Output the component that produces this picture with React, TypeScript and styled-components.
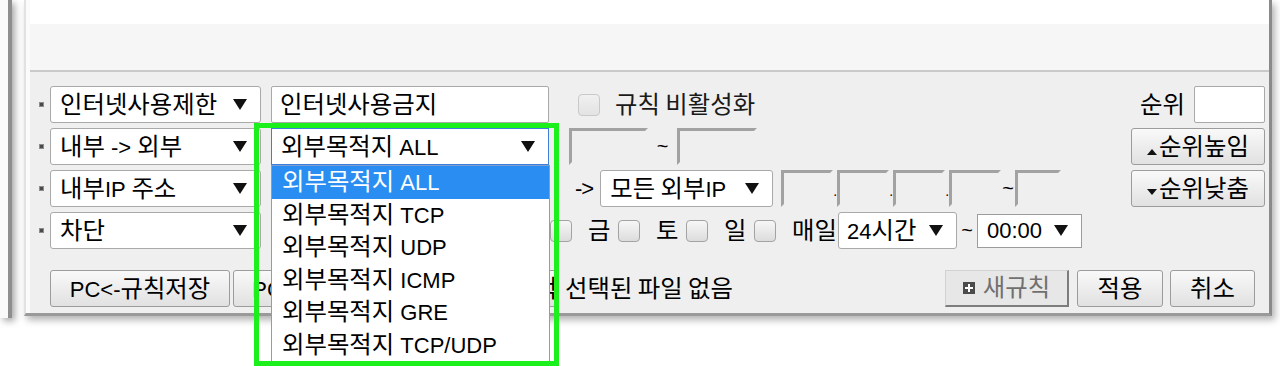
import React from "react";
import styled, { createGlobalStyle } from "styled-components";

const GlobalStyle = createGlobalStyle`
  html, body { margin: 0; padding: 0; background: #ffffff; overflow: hidden; }
  body {
    font-family: "Liberation Sans", "Noto Sans CJK KR", sans-serif;
    font-size: 22px;
    color: #000;
  }
  * { box-sizing: border-box; }
`;

const Desktop = styled.div`
  display: flex;
  align-items: flex-start;
  width: 1280px;
  height: 366px;
`;

const BackWindow = styled.div`
  flex-shrink: 0;
  width: 12px;
  height: 318px;
  background: #fafafa;
  border-right: 4px solid #8e8e8e;
  box-shadow: 3px 3px 7px rgba(0, 0, 0, 0.35);
`;

const Panel = styled.div`
  flex-shrink: 0;
  margin-left: 12px;
  width: 1248px;
  height: 316px;
  display: flex;
  flex-direction: column;
  background: #fbfbfb;
  border-left: 2px solid #e2e2e2;
  border-right: 3px solid #8a8a8a;
  border-bottom: 3px solid #9a9a9a;
  padding-left: 4px;
  box-shadow: 3px 4px 7px rgba(0, 0, 0, 0.3);
`;

const TopStrip = styled.div`
  height: 24px;
  background: #ffffff;
`;

const Header = styled.div`
  height: 48px;
  background: #f6f6f6;
  border-bottom: 2px solid #c9c9c9;
`;

const Body = styled.div`
  position: relative;
  flex: 1;
  display: flex;
  flex-direction: column;
  gap: 5px;
  padding: 14px 4px 6px 9px;
  background: #efefef;
`;

const Row = styled.div<{ $mt?: number; $pl?: number }>`
  display: flex;
  align-items: center;
  height: 37px;
  margin-top: ${(p) => p.$mt ?? 0}px;
  padding-left: ${(p) => p.$pl ?? 0}px;
  white-space: nowrap;
`;

const Bullet = styled.span`
  flex-shrink: 0;
  width: 5px;
  height: 5px;
  margin-right: 6px;
  background: #4a4a4a;
  border: 1px solid #8c8c8c;
`;

const Spacer = styled.div`
  flex: 1;
`;

const Hangul = styled.span`
  font-family: "Noto Sans CJK KR", sans-serif;
  font-size: 24.4px;
  line-height: 1;
`;

const HANGUL_RUN = /([\uAC00-\uD7A3]+(?: [\uAC00-\uD7A3]+)*)/;

const T = ({ children }: { children: string }) => (
  <span>
    {children
      .split(HANGUL_RUN)
      .filter((s) => s.length > 0)
      .map((s, i) =>
        /[\uAC00-\uD7A3]/.test(s) ? <Hangul key={i}>{s}</Hangul> : <React.Fragment key={i}>{s}</React.Fragment>
      )}
  </span>
);

const Caret = styled.span<{ $dir?: "up" | "down"; $small?: boolean; $mt?: number }>`
  display: inline-block;
  flex-shrink: 0;
  width: 0;
  height: 0;
  margin-top: ${(p) => p.$mt ?? 0}px;
  margin-right: ${(p) => (p.$small ? 2 : 0)}px;
  border-left: ${(p) => (p.$small ? 5 : 7)}px solid transparent;
  border-right: ${(p) => (p.$small ? 5 : 7)}px solid transparent;
  ${(p) =>
    p.$dir === "up"
      ? `border-bottom: ${p.$small ? 6 : 11}px solid #111;`
      : `border-top: ${p.$small ? 6 : 11}px solid #111;`}
`;

const SelectBox = styled.div<{
  $w: number;
  $ml?: number;
  $h?: number;
  $focused?: boolean;
  $square?: boolean;
  $pl?: number;
}>`
  flex-shrink: 0;
  width: ${(p) => p.$w}px;
  height: ${(p) => p.$h ?? 37}px;
  margin-left: ${(p) => p.$ml ?? 0}px;
  display: flex;
  align-items: center;
  justify-content: space-between;
  padding: 0 13px 0 ${(p) => p.$pl ?? 9}px;
  background: #ffffff;
  border: 1px solid ${(p) => (p.$focused ? "#3f7fdc" : p.$square ? "#9c9c9c" : "#a9a9a9")};
  border-radius: ${(p) => (p.$square || p.$focused ? 0 : 3)}px;
`;

const TextField = styled.div<{ $w: number; $ml?: number }>`
  flex-shrink: 0;
  width: ${(p) => p.$w}px;
  height: 37px;
  margin-left: ${(p) => p.$ml ?? 0}px;
  display: flex;
  align-items: center;
  padding-left: 8px;
  background: #ffffff;
  border: 1px solid #a9a9a9;
  border-radius: 2px;
`;

const InsetField = styled.div<{ $w: number; $ml?: number }>`
  flex-shrink: 0;
  width: ${(p) => p.$w}px;
  height: 37px;
  margin-left: ${(p) => p.$ml ?? 0}px;
  border-style: solid;
  border-width: 3px;
  border-color: #a2a2a2 #efefef #efefef #a2a2a2;
`;

const Tilde = styled.span<{ $w: number }>`
  flex-shrink: 0;
  width: ${(p) => p.$w}px;
  text-align: center;
  font-size: 20px;
`;

const Dot = styled.span`
  flex-shrink: 0;
  width: 4px;
  height: 37px;
  display: flex;
  align-items: flex-end;
  justify-content: center;
  padding-bottom: 9px;
  font-size: 14px;
  line-height: 1;
`;

const Arrow = styled.span<{ $ml?: number }>`
  flex-shrink: 0;
  margin-left: ${(p) => p.$ml ?? 0}px;
  letter-spacing: -1px;
`;

const Check = styled.span<{ $ml?: number; $disabled?: boolean }>`
  flex-shrink: 0;
  width: 22px;
  height: 22px;
  margin-left: ${(p) => p.$ml ?? 0}px;
  border: 1px solid ${(p) => (p.$disabled ? "#c9c9c9" : "#a3a3a3")};
  border-radius: 4px;
  background: ${(p) =>
    p.$disabled ? "linear-gradient(#f0f0f0, #e3e3e3)" : "linear-gradient(#f7f7f7, #dcdcdc)"};
`;

const Label = styled.span<{ $ml?: number; $w?: number; $mr?: number; $color?: string }>`
  flex-shrink: 0;
  margin-left: ${(p) => p.$ml ?? 0}px;
  margin-right: ${(p) => p.$mr ?? 0}px;
  ${(p) => (p.$w ? `width: ${p.$w}px;` : "")}
  color: ${(p) => p.$color ?? "#000"};
`;

const HiddenGroup = styled.div<{ $w: number; $ml?: number }>`
  flex-shrink: 0;
  display: flex;
  align-items: center;
  gap: 6px;
  width: ${(p) => p.$w}px;
  margin-left: ${(p) => p.$ml ?? 0}px;
`;

const Button = styled.button<{ $w: number; $ml?: number; $mr?: number }>`
  flex-shrink: 0;
  width: ${(p) => p.$w}px;
  height: 37px;
  margin: 0 ${(p) => p.$mr ?? 0}px 0 ${(p) => p.$ml ?? 0}px;
  padding: 0;
  display: flex;
  align-items: center;
  justify-content: center;
  font: inherit;
  color: #000;
  background: linear-gradient(#f9f9f9, #e1e1e1);
  border: 1px solid #9c9c9c;
  border-radius: 3px;
  white-space: nowrap;
`;

const NewRuleButton = styled.button<{ $w: number }>`
  flex-shrink: 0;
  width: ${(p) => p.$w}px;
  height: 37px;
  padding: 0;
  display: flex;
  align-items: center;
  justify-content: center;
  gap: 8px;
  font: inherit;
  color: #707070;
  background: #e7e7e7;
  border-style: solid;
  border-width: 1px 2px 2px 1px;
  border-color: #d2d2d2 #7d7d7d #7d7d7d #d2d2d2;
  border-radius: 0;
`;

const DropWrap = styled.div<{ $ml?: number }>`
  position: relative;
  flex-shrink: 0;
  margin-left: ${(p) => p.$ml ?? 0}px;
`;

const OptionList = styled.div`
  position: absolute;
  top: 37px;
  left: 0;
  z-index: 2;
  width: 279px;
  background: #ffffff;
  border: 1px solid #7f9fd0;
`;

const OptionItem = styled.div<{ $active?: boolean }>`
  height: 32.5px;
  display: flex;
  align-items: center;
  padding-left: 10px;
  white-space: nowrap;
  background: ${(p) => (p.$active ? "#2a8df2" : "transparent")};
  color: ${(p) => (p.$active ? "#ffffff" : "#000000")};
`;

const HighlightFrame = styled.div`
  position: absolute;
  left: -17px;
  top: -5px;
  z-index: 3;
  width: 305px;
  height: 243px;
  border: 5px solid #1cf01c;
  pointer-events: none;
`;

const PlusIcon = () => (
  <svg width="12" height="12" viewBox="0 0 12 12">
    <rect x="0" y="0" width="12" height="12" fill="#4b4b4b" />
    <rect x="5" y="2" width="2" height="8" fill="#ffffff" />
    <rect x="2" y="5" width="8" height="2" fill="#ffffff" />
  </svg>
);

const options = [
  "외부목적지 ALL",
  "외부목적지 TCP",
  "외부목적지 UDP",
  "외부목적지 ICMP",
  "외부목적지 GRE",
  "외부목적지 TCP/UDP",
];

const days = ["월", "화", "수", "목", "금", "토", "일"];

export default function App() {
  return (
    <>
      <GlobalStyle />
      <Desktop>
        <BackWindow />
        <Panel>
          <TopStrip />
          <Header />
          <Body>
            <Row>
              <Bullet />
              <SelectBox $w={211}>
                <T>인터넷사용제한</T>
                <Caret />
              </SelectBox>
              <TextField $w={278} $ml={10}><T>인터넷사용금지</T></TextField>
              <Check $ml={29} $disabled />
              <Label $ml={15} $color="#1a1a1a"><T>규칙 비활성화</T></Label>
              <Spacer />
              <Label><T>순위</T></Label>
              <TextField $w={71} $ml={9} />
            </Row>

            <Row>
              <Bullet />
              <SelectBox $w={211}>
                <T>내부 -&gt; 외부</T>
                <Caret />
              </SelectBox>
              <DropWrap $ml={10}>
                <SelectBox $w={278} $focused>
                  <T>외부목적지 ALL</T>
                  <Caret />
                </SelectBox>
                <OptionList>
                  {options.map((o, i) => (
                    <OptionItem key={o} $active={i === 0}>
                      <T>{o}</T>
                    </OptionItem>
                  ))}
                </OptionList>
                <HighlightFrame />
              </DropWrap>
              <InsetField $w={79} $ml={20} />
              <Tilde $w={29}>~</Tilde>
              <InsetField $w={80} />
              <Spacer />
              <Button $w={134}>
                <Caret $dir="up" $small $mt={11} />
                <T>순위높임</T>
              </Button>
            </Row>

            <Row>
              <Bullet />
              <SelectBox $w={211}>
                <T>내부IP 주소</T>
                <Caret />
              </SelectBox>
              <HiddenGroup $w={288} $ml={10}>
                <InsetField $w={62} />
                <InsetField $w={62} />
                <InsetField $w={62} />
                <InsetField $w={62} />
              </HiddenGroup>
              <Arrow $ml={16}>-&gt;</Arrow>
              <SelectBox $w={173} $ml={7}>
                <T>모든 외부IP</T>
                <Caret />
              </SelectBox>
              <InsetField $w={52} $ml={8} />
              <Dot>.</Dot>
              <InsetField $w={52} />
              <Dot>.</Dot>
              <InsetField $w={52} />
              <Dot>.</Dot>
              <InsetField $w={52} />
              <Tilde $w={14}>~</Tilde>
              <InsetField $w={46} />
              <Spacer />
              <Button $w={134}>
                <Caret $dir="down" $small $mt={7} />
                <T>순위낮춤</T>
              </Button>
            </Row>

            <Row>
              <Bullet />
              <SelectBox $w={211}>
                <T>차단</T>
                <Caret />
              </SelectBox>
              {days.map((d, i) => (
                <React.Fragment key={d}>
                  <Check $ml={i === 0 ? 17 : 0} />
                  <Label $ml={16} $w={22} $mr={8}>
                    <T>{d}</T>
                  </Label>
                </React.Fragment>
              ))}
              <Check />
              <Label $ml={16} $w={44} $mr={2}>
                <T>매일</T>
              </Label>
              <SelectBox $w={119} $pl={8}>
                <T>24시간</T>
                <Caret />
              </SelectBox>
              <Tilde $w={20}>~</Tilde>
              <SelectBox $w={105} $h={34} $square>
                <span>00:00</span>
                <Caret />
              </SelectBox>
            </Row>

            <Row $mt={16} $pl={11}>
              <Button $w={180}><T>PC&lt;-규칙저장</T></Button>
              <Button $w={224} $ml={3}>
                <T>PC-&gt;규칙불러오기</T>
              </Button>
              <Button $w={96} $ml={4}>
                <T>파일 선택</T>
              </Button>
              <Label $ml={8}><T>선택된 파일 없음</T></Label>
              <Spacer />
              <NewRuleButton $w={124}>
                <PlusIcon />
                <T>새규칙</T>
              </NewRuleButton>
              <Button $w={86} $ml={8}>
                <T>적용</T>
              </Button>
              <Button $w={85} $ml={7} $mr={10}>
                <T>취소</T>
              </Button>
            </Row>
          </Body>
        </Panel>
      </Desktop>
    </>
  );
}
